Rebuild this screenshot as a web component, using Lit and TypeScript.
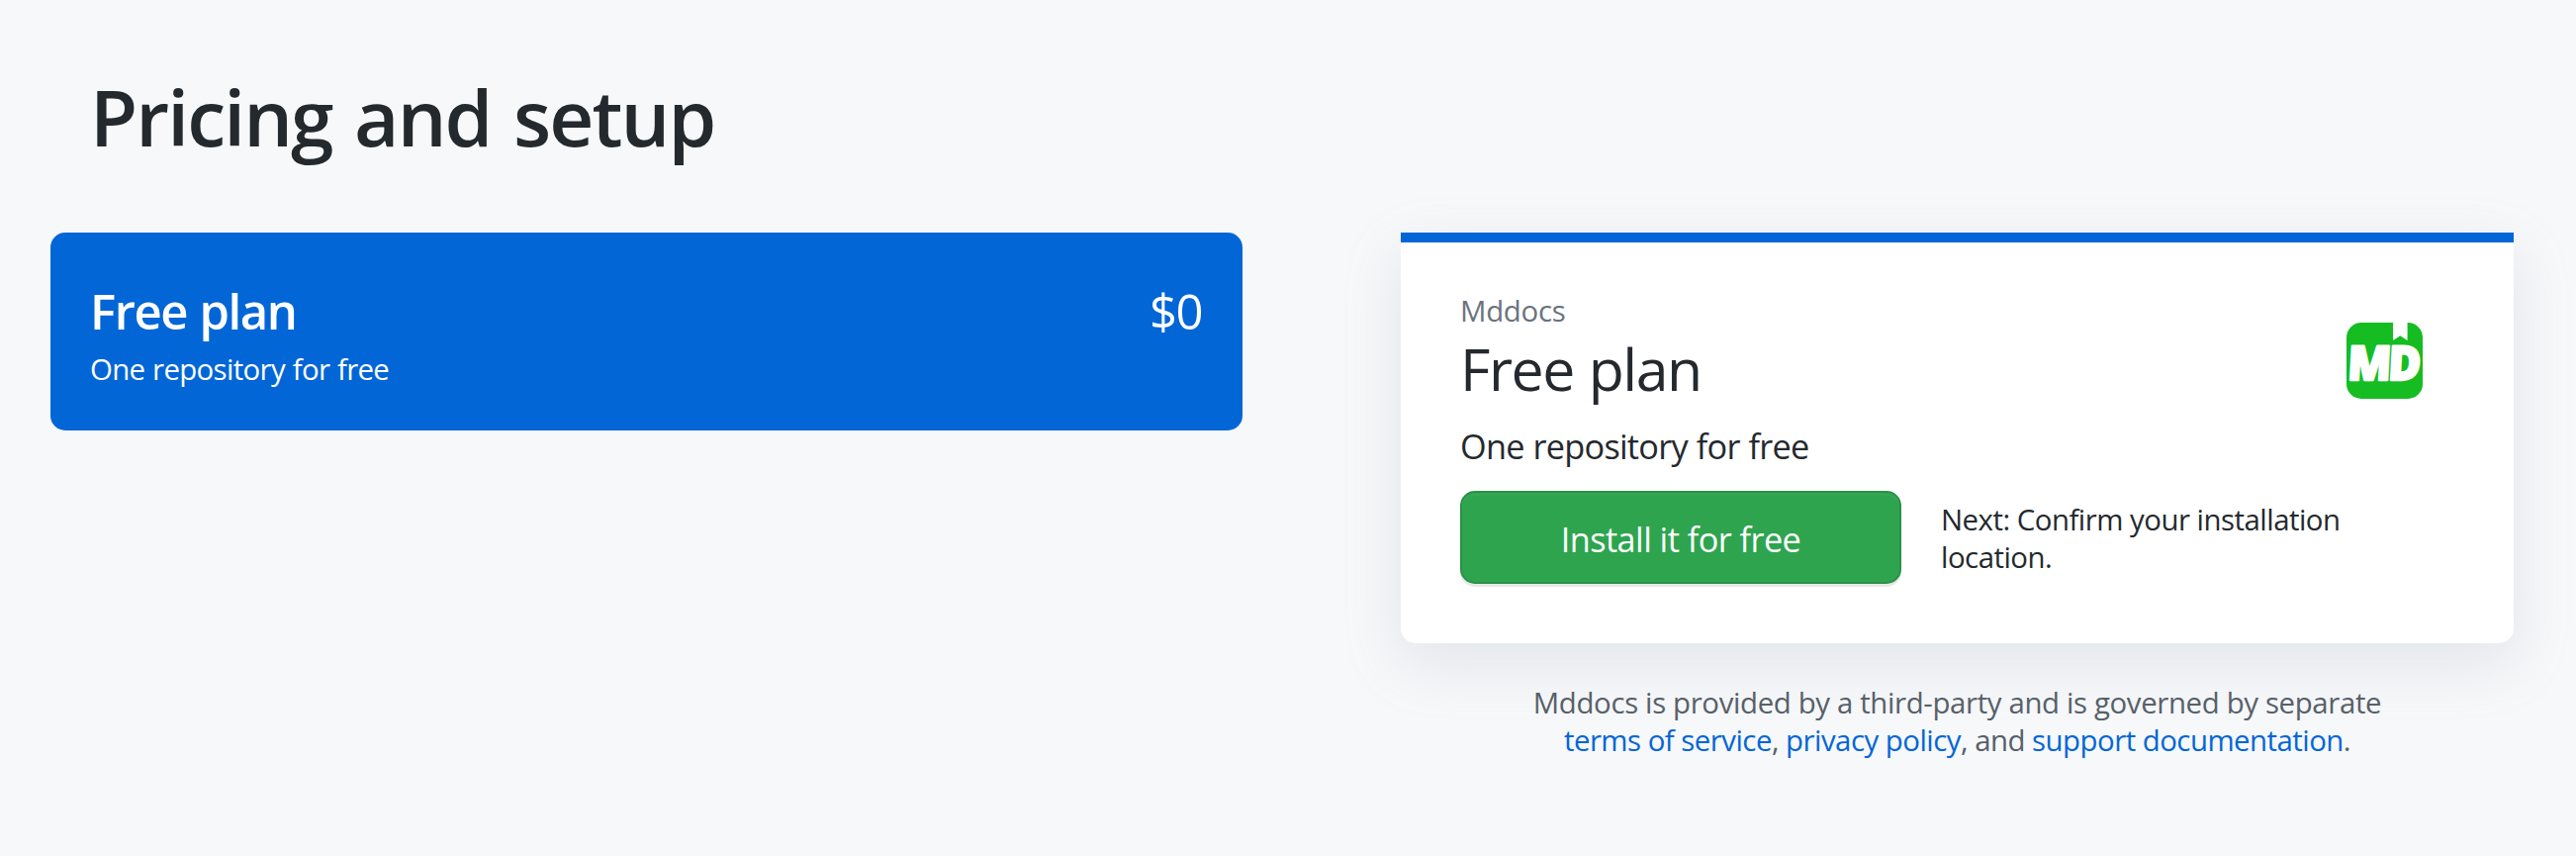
import { LitElement, html, css } from "lit";
import { customElement, property } from "lit/decorators.js";

@customElement("md-logo")
class MdLogo extends LitElement {
  static styles = css`
    :host { display: block; width: 77px; height: 77px; }
    svg { display: block; overflow: visible; }
    .letter {
      font: 800 48px "Open Sans", sans-serif;
      fill: #fff;
      stroke: #fff;
      stroke-width: 2.4;
      stroke-linejoin: round;
    }
  `;
  render() {
    return html`
      <svg width="77" height="77" viewBox="0 0 77 77" role="img" aria-label="MD">
        <rect width="77" height="77" rx="15" fill="#15bd22" />
        <path d="M47 0h14.6v18l-7.3-4.8-7.3 4.8z" fill="#fff" />
        <g transform="translate(0 58) skewX(-3)">
          <text class="letter" x="0.5" y="0" textLength="44" lengthAdjust="spacingAndGlyphs">M</text>
          <text class="letter" x="41.5" y="0" textLength="33" lengthAdjust="spacingAndGlyphs">D</text>
        </g>
      </svg>
    `;
  }
}

@customElement("plan-option")
class PlanOption extends LitElement {
  @property() name = "";
  @property() description = "";
  @property() price = "";
  static styles = css`
    :host {
      display: block;
      box-sizing: border-box;
      height: 200px;
      padding: 48px 41px 0 40px;
      border-radius: 15px;
      background: #0366d6;
      color: #fff;
    }
    .row { display: flex; justify-content: space-between; font-size: 49px; line-height: 62px; }
    .name { font-weight: 600; letter-spacing: -1.4px; word-spacing: 1px; }
    .price { letter-spacing: -1.5px; }
    .description { margin-top: 9px; font-size: 29.4px; line-height: 38px; letter-spacing: -0.66px; word-spacing: 0.7px; }
  `;
  render() {
    return html`
      <div class="row"><span class="name">${this.name}</span><span class="price">${this.price}</span></div>
      <div class="description">${this.description}</div>
    `;
  }
}

@customElement("app-root")
class AppRoot extends LitElement {
  static styles = css`
    :host {
      display: block;
      box-sizing: border-box;
      height: 865px;
      padding: 68px 63px 0 51px;
      overflow: hidden;
      background: #f6f8fa;
      color: #24292e;
      font-family: "Open Sans", "Noto Sans", sans-serif;
    }
    h1 {
      margin: 0 0 67px 40px;
      font-size: 78.4px;
      font-weight: 600;
      line-height: 100px;
      letter-spacing: -1.9px;
      word-spacing: 4px;
    }
    .columns { display: grid; grid-template-columns: 1205px 1125px; gap: 160px; align-items: start; }
    .card {
      box-sizing: border-box;
      height: 415px;
      padding: 50px 60px 0;
      border-top: 10px solid #0366d6;
      border-radius: 0 0 15px 15px;
      background: #fff;
      box-shadow: 0 20px 60px rgba(149, 157, 165, 0.2);
    }
    .head { display: flex; justify-content: space-between; padding-right: 32px; }
    .logo { margin-top: 31px; }
    .app { color: #6a737d; font-size: 29.4px; line-height: 38px; letter-spacing: -0.3px; }
    .plan { margin: 2px 0 0; font-size: 59px; line-height: 75px; letter-spacing: -1.5px; word-spacing: 1px; }
    .description { margin: 15px 0 19px; font-size: 34.3px; line-height: 52px; letter-spacing: -0.76px; word-spacing: 0.7px; }
    .action { display: flex; align-items: center; gap: 40px; }
    .install {
      box-sizing: border-box;
      width: 446px;
      height: 94px;
      padding: 2px 0 0;
      border: 2px solid rgba(27, 31, 35, 0.15);
      border-radius: 15px;
      background: #2ea44f;
      box-shadow: 0 3px 0 rgba(27, 31, 35, 0.1), inset 0 3px 0 rgba(255, 255, 255, 0.03);
      color: #fff;
      font-family: inherit;
      font-size: 34.3px;
      letter-spacing: -0.57px;
    }
    .next { width: 440px; padding-top: 3px; font-size: 29.4px; line-height: 37.5px; letter-spacing: -0.51px; }
    .legal {
      margin-top: 42px;
      color: #586069;
      text-align: center;
      font-size: 29.4px;
      line-height: 37.5px;
      letter-spacing: -0.36px;
    }
    .links { letter-spacing: -0.52px; }
    a { color: #0366d6; text-decoration: none; }
  `;
  render() {
    return html`
      <h1>Pricing and setup</h1>
      <div class="columns">
        <plan-option name="Free plan" description="One repository for free" price="$0"></plan-option>
        <div>
          <section class="card">
            <div class="head">
              <div>
                <div class="app">Mddocs</div>
                <div class="plan">Free plan</div>
              </div>
              <md-logo class="logo"></md-logo>
            </div>
            <div class="description">One repository for free</div>
            <div class="action">
              <button class="install">Install it for free</button>
              <div class="next">Next: Confirm your installation location.</div>
            </div>
          </section>
          <div class="legal">
            <div>Mddocs is provided by a third-party and is governed by separate</div>
            <div class="links"><a href="#">terms of service</a>, <a href="#">privacy policy</a>, and <a href="#">support documentation</a>.</div>
          </div>
        </div>
      </div>
    `;
  }
}
